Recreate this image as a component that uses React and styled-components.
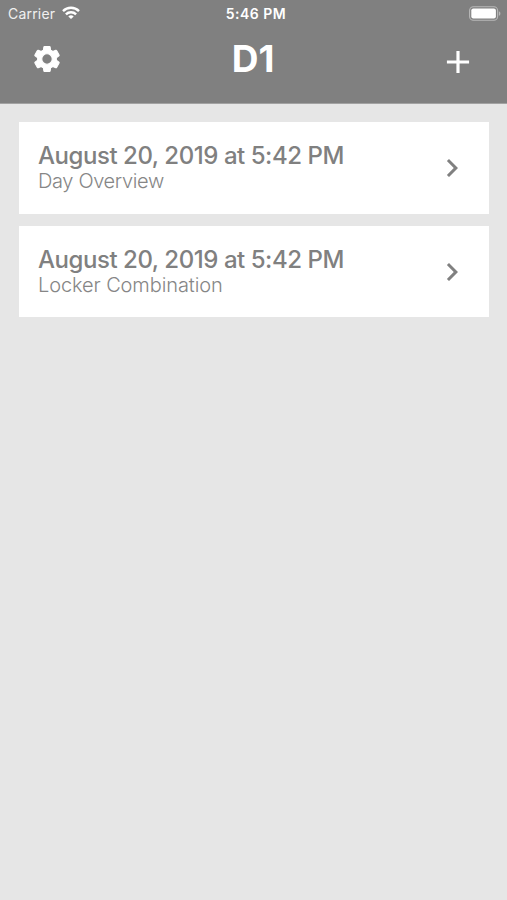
import React from "react"
import styled, { createGlobalStyle } from "styled-components"
import { MdAdd, MdChevronRight } from "react-icons/md"

const GlobalStyle = createGlobalStyle`
  * {
    box-sizing: border-box;
  }
  body {
    margin: 0;
    background: #e6e6e6;
    font-family: Inter, "Liberation Sans", sans-serif;
  }
`

const Screen = styled.div`
  min-height: 100vh;
  background: #e6e6e6;
`

const Header = styled.header`
  height: 104px;
  background: #808080;
  border-bottom: 1px solid #a2a2a2;
  color: #fff;
`

const StatusBar = styled.div`
  height: 27px;
  padding: 0 6px 0 8px;
  display: grid;
  grid-template-columns: 1fr auto 1fr;
  align-items: center;
  font-size: 14px;
  line-height: 27px;
  white-space: nowrap;
`

const Carrier = styled.div`
  display: flex;
  align-items: center;
  gap: 7px;
  color: #f0f0f0;
  letter-spacing: 0.2px;
`

const Clock = styled.div`
  padding-left: 3px;
  font-weight: 600;
  letter-spacing: 0.5px;
`

const WifiIcon = styled.svg`
  margin-bottom: 1px;
`

const BatteryIcon = styled.svg`
  justify-self: end;
`

const NavBar = styled.div`
  height: 64px;
  padding: 0 30px 0 32px;
  display: grid;
  grid-template-columns: 1fr auto 1fr;
  align-items: center;
`

const Title = styled.h1`
  margin: 0;
  padding-right: 3px;
  font-size: 37px;
  font-weight: 700;
  line-height: 64px;
`

const IconButton = styled.button`
  padding: ${props => props.$pad || "0"};
  border: 0;
  background: none;
  color: inherit;
  display: flex;
  justify-self: ${props => props.$side};
`

const List = styled.main`
  padding: 18px 18px 0 19px;
  display: flex;
  flex-direction: column;
  gap: 12.4px;
`

const Card = styled.article`
  height: 91.5px;
  padding: 0 19px;
  background: #fff;
  display: flex;
  align-items: center;
  justify-content: space-between;
  color: #808080;
`

const CardText = styled.div`
  white-space: nowrap;
`

const CardDate = styled.h2`
  margin: 0;
  font-size: 24px;
  font-weight: 500;
  line-height: 27px;
  letter-spacing: -0.45px;
`

const CardName = styled.p`
  margin: 0;
  color: #868686;
  font-size: 20px;
  font-weight: 300;
  line-height: 24px;
  letter-spacing: ${props => props.$spacing};
`

const entries = [
    { date: "August 20, 2019 at 5:42 PM", name: "Day Overview", spacing: "-0.35px" },
    { date: "August 20, 2019 at 5:42 PM", name: "Locker Combination", spacing: "-0.1px" },
]

const Wifi = () => (
    <WifiIcon width="18" height="14" viewBox="0 0 18 14" fill="none" stroke="#fff" strokeWidth="2.4">
        <path d="M1 5.1a11.4 11.4 0 0 1 16 0" />
        <path d="M3.9 8.3a7.2 7.2 0 0 1 10.2 0" />
        <path d="M9 13 6.3 10.5a3.8 3.8 0 0 1 5.4 0z" fill="#fff" stroke="none" />
    </WifiIcon>
)

const Battery = () => (
    <BatteryIcon width="32" height="15" viewBox="0 0 32 15">
        <rect x="0.6" y="0.8" width="28" height="13.4" rx="3.8" fill="none" stroke="#b8b8b8" strokeWidth="1.1" />
        <rect x="2.3" y="2.6" width="24.6" height="9.8" rx="2" fill="#fff" />
        <path d="M29.9 5.2c2 .8 2 3.8 0 4.6z" fill="#b8b8b8" />
    </BatteryIcon>
)

const Gear = () => (
    <svg width="30" height="30" viewBox="0 0 24 24" fill="currentColor" stroke="currentColor" strokeWidth="0.9">
        <path d="M19.43 12.98c.04-.32.07-.64.07-.98s-.03-.66-.07-.98l2.11-1.65c.19-.15.24-.42.12-.64l-2-3.46c-.12-.22-.39-.3-.61-.22l-2.49 1c-.52-.4-1.08-.73-1.69-.98l-.38-2.65A.488.488 0 0 0 14 2h-4c-.25 0-.46.18-.49.42l-.38 2.65c-.61.25-1.17.59-1.69.98l-2.49-1c-.23-.09-.49 0-.61.22l-2 3.46c-.13.22-.07.49.12.64l2.11 1.65c-.04.32-.07.65-.07.98s.03.66.07.98l-2.11 1.65c-.19.15-.24.42-.12.64l2 3.46c.12.22.39.3.61.22l2.49-1c.52.4 1.08.73 1.69.98l.38 2.65c.03.24.24.42.49.42h4c.25 0 .46-.18.49-.42l.38-2.65c.61-.25 1.17-.59 1.69-.98l2.49 1c.23.09.49 0 .61-.22l2-3.46c.12-.22.07-.49-.12-.64l-2.11-1.65zM12 16.2c-2.32 0-4.2-1.88-4.2-4.2s1.88-4.2 4.2-4.2 4.2 1.88 4.2 4.2-1.88 4.2-4.2 4.2z" />
    </svg>
)

function EntryCard ({ date, name, spacing }){
    return(
        <Card>
            <CardText>
                <CardDate>{date}</CardDate>
                <CardName $spacing={spacing}>{name}</CardName>
            </CardText>
            <MdChevronRight size={36} />
        </Card>
    )
}

export default function App (){
    return(
        <Screen>
            <GlobalStyle />
            <Header>
                <StatusBar>
                    <Carrier>Carrier<Wifi /></Carrier>
                    <Clock>5:46 PM</Clock>
                    <Battery />
                </StatusBar>
                <NavBar>
                    <IconButton $side="start" aria-label="Settings"><Gear /></IconButton>
                    <Title>D1</Title>
                    <IconButton $side="end" $pad="6px 0 0" aria-label="Add"><MdAdd size={38} /></IconButton>
                </NavBar>
            </Header>
            <List>
                {entries.map(entry => <EntryCard key={entry.name} {...entry} />)}
            </List>
        </Screen>
    )
}
